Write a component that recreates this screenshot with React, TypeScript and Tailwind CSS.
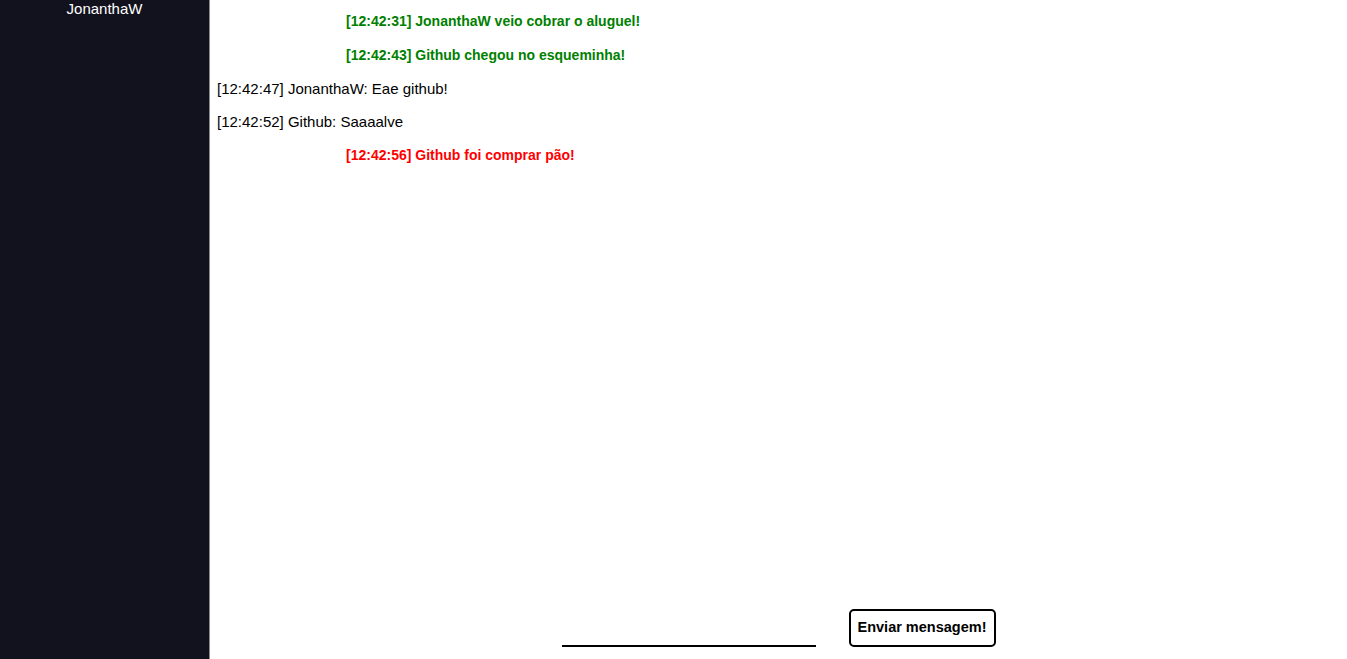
import React, { useState } from "react";

type Message = {
  time: string;
  text: string;
  kind: "chat" | "join" | "leave";
};

const messages: Message[] = [
  { time: "12:42:31", text: "JonanthaW veio cobrar o aluguel!", kind: "join" },
  { time: "12:42:43", text: "Github chegou no esqueminha!", kind: "join" },
  { time: "12:42:47", text: "JonanthaW: Eae github!", kind: "chat" },
  { time: "12:42:52", text: "Github: Saaaalve", kind: "chat" },
  { time: "12:42:56", text: "Github foi comprar pão!", kind: "leave" },
];

const App: React.FC = () => {
  const [text, setText] = useState<string>("");

  return (
    <div
      className="flex h-screen w-full overflow-hidden bg-white text-black"
      style={{ fontFamily: '"Liberation Sans", Arial, sans-serif' }}
    >
      {/* Users sidebar */}
      <aside className="w-[210px] shrink-0 bg-[#12121e] border-r border-[#8a8a8a]">
        <ul className="text-center text-[15px] leading-[18px] text-white">
          <li>JonanthaW</li>
        </ul>
      </aside>

      <main className="flex flex-1 flex-col">
        {/* Chat messages */}
        <div className="flex-1 px-[7px] pt-[12px] text-[15px] leading-[18px]">
          {messages.map((m, i) => (
            <p
              key={i}
              className={`h-[33.5px] ${
                m.kind === "join"
                  ? "pl-[129px] text-[14px] font-bold text-[#008000]"
                  : m.kind === "leave"
                  ? "pl-[129px] text-[14px] font-bold text-[#ff0000]"
                  : ""
              } ${i === 2 ? "pt-[1px]" : ""}`}
            >
              [{m.time}] {m.text}
            </p>
          ))}
        </div>

        {/* Send form */}
        <form
          className="flex items-end justify-center gap-[33px] pb-[12px]"
          onSubmit={(e) => {
            e.preventDefault();
            setText("");
          }}
        >
          <input
            type="text"
            value={text}
            onChange={(e) => setText(e.target.value)}
            className="h-[30px] w-[254px] border-b-2 border-black bg-transparent px-1 text-[15px] outline-none"
          />
          <button
            type="submit"
            className="h-[38px] w-[147px] rounded-[5px] border-2 border-black bg-white text-[14.5px] font-bold"
          >
            Enviar mensagem!
          </button>
        </form>
      </main>
    </div>
  );
};

export default App;
